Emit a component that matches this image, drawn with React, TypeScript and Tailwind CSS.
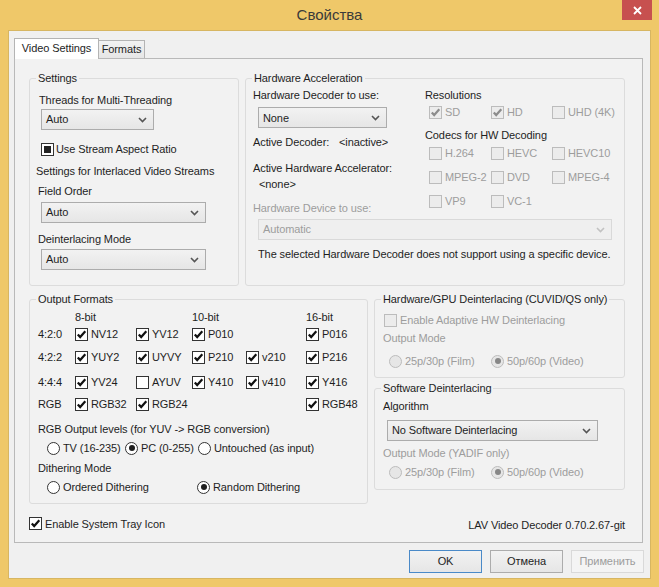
import React from 'react';

type BoxState = 'on' | 'off' | 'mixed';

function Box({ state, disabled }: { state: BoxState; disabled?: boolean }) {
  return (
    <span
      className={`flex h-[13px] w-[13px] shrink-0 items-center justify-center border ${
        disabled ? 'border-[#bcbcbc] bg-[#ececec]' : 'border-[#333333] bg-white'
      }`}
    >
      {state === 'on' && (
        <svg width="11" height="11" viewBox="0 0 11 11">
          <path d="M1.8 5.4 4.2 8.1 9.3 2.3" fill="none" stroke={disabled ? '#8c8c8c' : '#111111'} strokeWidth="2.2" />
        </svg>
      )}
      {state === 'mixed' && <span className="h-[7px] w-[7px] bg-[#222222]" />}
    </span>
  );
}

function Check({ label, state = 'on', disabled }: { label: string; state?: BoxState; disabled?: boolean }) {
  return (
    <span className="flex items-center gap-[3px] leading-[14px]">
      <Box state={state} disabled={disabled} />
      <span className={disabled ? 'text-[#9d9d9d]' : ''}>{label}</span>
    </span>
  );
}

function Radio({ label, checked, disabled }: { label: string; checked?: boolean; disabled?: boolean }) {
  return (
    <span className="flex items-center gap-[3px] leading-[14px]">
      <span
        className={`flex h-[13px] w-[13px] shrink-0 items-center justify-center rounded-full border ${
          disabled ? 'border-[#bcbcbc] bg-[#e6e6e6]' : 'border-[#333333] bg-white'
        }`}
      >
        {checked && <span className={`h-[6px] w-[6px] rounded-full ${disabled ? 'bg-[#878787]' : 'bg-[#1e1e1e]'}`} />}
      </span>
      <span className={disabled ? 'text-[#9d9d9d]' : ''}>{label}</span>
    </span>
  );
}

function Combo({ value, className, disabled }: { value: string; className: string; disabled?: boolean }) {
  return (
    <div
      className={`flex h-[21px] items-center justify-between border pl-[4px] pr-[6px] ${className} ${
        disabled
          ? 'border-[#d9d9d9] bg-[#efefef] text-[#9d9d9d]'
          : 'border-[#acacac] bg-linear-to-b from-[#f2f2f2] to-[#e6e6e6]'
      }`}
    >
      <span>{value}</span>
      <svg width="9" height="6" viewBox="0 0 9 6">
        <path d="M1 1 4.5 4.5 8 1" fill="none" stroke={disabled ? '#c2c2c2' : '#555555'} strokeWidth="1.6" />
      </svg>
    </div>
  );
}

function Group({ title, className, children }: { title: string; className: string; children: React.ReactNode }) {
  return (
    <fieldset className={`rounded-[3px] border border-[#dcdcdc] ${className}`}>
      <legend className="ml-[6px] px-[2px] leading-[14px]">{title}</legend>
      {children}
    </fieldset>
  );
}

const formatRows: { name: string; cells: (null | { label: string; on: boolean })[] }[] = [
  { name: '4:2:0', cells: [{ label: 'NV12', on: true }, { label: 'YV12', on: true }, { label: 'P010', on: true }, null, { label: 'P016', on: true }] },
  { name: '4:2:2', cells: [{ label: 'YUY2', on: true }, { label: 'UYVY', on: true }, { label: 'P210', on: true }, { label: 'v210', on: true }, { label: 'P216', on: true }] },
  { name: '4:4:4', cells: [{ label: 'YV24', on: true }, { label: 'AYUV', on: false }, { label: 'Y410', on: true }, { label: 'v410', on: true }, { label: 'Y416', on: true }] },
  { name: 'RGB', cells: [{ label: 'RGB32', on: true }, { label: 'RGB24', on: true }, null, null, { label: 'RGB48', on: true }] },
];

const rowGaps = ['mt-[3px]', 'mt-[9px]', 'mt-[11px]', 'mt-[8px]'];

export default function App() {
  return (
    <div className="relative h-[587px] w-[659px] overflow-hidden bg-[#efc869] font-['Liberation_Sans',Arial,sans-serif] text-[11px] tracking-[-0.1px] text-[#1e1e1e]">
      {/* title bar */}
      <div className="flex h-[30px] items-center justify-center text-[15px] tracking-normal text-[#3a3a3a]">Свойства</div>
      <button className="absolute right-[7px] top-0 flex h-[20px] w-[30px] items-center justify-center bg-[#c7504f]">
        <svg width="9" height="9" viewBox="0 0 9 9">
          <path d="M1 1 8 8M8 1 1 8" stroke="#ffffff" strokeWidth="1.8" />
        </svg>
      </button>

      {/* client area */}
      <div className="mx-[8px] h-[549px] border border-[#d7b662] bg-[#f0f0f0] pl-[5px] pt-[7px]">
        {/* tabs */}
        <div className="flex h-[20px] items-end">
          <div className="relative z-10 -mb-px flex h-[21px] w-[85px] items-center justify-center border border-b-0 border-[#b4b4b4] bg-white pb-[1px]">
            Video Settings
          </div>
          <div className="flex h-[18px] w-[46px] items-center justify-center border border-b-0 border-l-0 border-[#b4b4b4] bg-linear-to-b from-[#f2f2f2] to-[#e6e6e6]">
            Formats
          </div>
        </div>

        {/* tab page */}
        <div className="h-[485px] w-[629px] border border-[#b9b9b9] bg-[#f2f2f2] pl-[14px] pr-[17px] pt-[12px]">
          <div className="flex gap-[6px]">
            <Group title="Settings" className="h-[215px] w-[210px]">
              <div className="ml-[9px] mt-[8px] leading-[14px]">Threads for Multi-Threading</div>
              <Combo value="Auto" className="ml-[11px] mt-[2px] w-[113px]" />
              <div className="ml-[11px] mt-[12px] flex items-center gap-[2px] leading-[14px]">
                <Box state="mixed" />
                <span>Use Stream Aspect Ratio</span>
              </div>
              <div className="ml-[6px] mt-[8px] leading-[14px]">Settings for Interlaced Video Streams</div>
              <div className="ml-[8px] mt-[6px] leading-[14px]">Field Order</div>
              <Combo value="Auto" className="ml-[11px] mt-[4px] w-[165px]" />
              <div className="ml-[8px] mt-[9px] leading-[14px]">Deinterlacing Mode</div>
              <Combo value="Auto" className="ml-[11px] mt-[3px] w-[165px]" />
            </Group>

            <Group title="Hardware Acceleration" className="h-[215px] w-[380px]">
              <div className="flex">
                <div className="ml-[7px] w-[172px] leading-[14px]">
                  <div className="mt-[3px]">Hardware Decoder to use:</div>
                  <Combo value="None" className="ml-[5px] mt-[5px] w-[129px]" />
                  <div className="mt-[7px] flex">
                    <span className="w-[86px]">Active Decoder:</span>
                    <span>&lt;inactive&gt;</span>
                  </div>
                  <div className="mt-[12px]">Active Hardware Accelerator:</div>
                  <div className="ml-[6px] mt-[2px]">&lt;none&gt;</div>
                  <div className="mt-[10px] text-[#9d9d9d]">Hardware Device to use:</div>
                </div>
                <div className="leading-[14px]">
                  <div className="mt-[3px]">Resolutions</div>
                  <div className="ml-[4px] mt-[3px] grid grid-cols-[62px_61px_auto]">
                    <Check label="SD" disabled />
                    <Check label="HD" disabled />
                    <Check label="UHD (4K)" state="off" disabled />
                  </div>
                  <div className="mt-[9px]">Codecs for HW Decoding</div>
                  <div className="ml-[4px] mt-[4px] grid grid-cols-[62px_61px_auto] gap-y-[10px]">
                    <Check label="H.264" state="off" disabled />
                    <Check label="HEVC" state="off" disabled />
                    <Check label="HEVC10" state="off" disabled />
                    <Check label="MPEG-2" state="off" disabled />
                    <Check label="DVD" state="off" disabled />
                    <Check label="MPEG-4" state="off" disabled />
                    <Check label="VP9" state="off" disabled />
                    <Check label="VC-1" state="off" disabled />
                  </div>
                </div>
              </div>
              <Combo value="Automatic" disabled className="ml-[12px] mt-[4px] w-[354px]" />
              <div className="ml-[12px] mt-[7px] leading-[14px]">
                The selected Hardware Decoder does not support using a specific device.
              </div>
            </Group>
          </div>

          <div className="mt-[6px] flex gap-[6px]">
            <Group title="Output Formats" className="h-[212px] w-[339px]">
              <div className="ml-[8px] mt-[4px] grid grid-cols-[37px_61px_56px_54px_60px_auto] leading-[14px]">
                <span />
                <span>8-bit</span>
                <span />
                <span>10-bit</span>
                <span />
                <span>16-bit</span>
              </div>
              {formatRows.map((row, i) => (
                <div
                  key={row.name}
                  className={`ml-[8px] grid grid-cols-[37px_61px_56px_54px_60px_auto] items-center leading-[14px] ${rowGaps[i]}`}
                >
                  <span>{row.name}</span>
                  {row.cells.map((c, j) => (c ? <Check key={j} label={c.label} state={c.on ? 'on' : 'off'} /> : <span key={j} />))}
                </div>
              ))}
              <div className="ml-[8px] mt-[11px] leading-[14px]">RGB Output levels (for YUV -&gt; RGB conversion)</div>
              <div className="ml-[17px] mt-[5px] flex">
                <div className="w-[78px]">
                  <Radio label="TV (16-235)" />
                </div>
                <div className="w-[73px]">
                  <Radio label="PC (0-255)" checked />
                </div>
                <Radio label="Untouched (as input)" />
              </div>
              <div className="ml-[8px] mt-[6px] leading-[14px]">Dithering Mode</div>
              <div className="ml-[17px] mt-[5px] flex">
                <div className="w-[150px]">
                  <Radio label="Ordered Dithering" />
                </div>
                <Radio label="Random Dithering" checked />
              </div>
            </Group>

            <div className="flex w-[251px] flex-col gap-[3px]">
              <Group title="Hardware/GPU Deinterlacing (CUVID/QS only)" className="h-[86px] w-[251px]">
                <div className="ml-[9px] mt-[7px]">
                  <Check label="Enable Adaptive HW Deinterlacing" state="off" disabled />
                </div>
                <div className="ml-[8px] mt-[4px] leading-[14px] text-[#9d9d9d]">Output Mode</div>
                <div className="ml-[14px] mt-[9px] flex">
                  <div className="w-[102px]">
                    <Radio label="25p/30p (Film)" disabled />
                  </div>
                  <Radio label="50p/60p (Video)" checked disabled />
                </div>
              </Group>
              <Group title="Software Deinterlacing" className="h-[109px] w-[251px]">
                <div className="ml-[8px] mt-[4px] leading-[14px]">Algorithm</div>
                <Combo value="No Software Deinterlacing" className="ml-[12px] mt-[7px] w-[211px]" />
                <div className="ml-[8px] mt-[5px] leading-[14px] text-[#9d9d9d]">Output Mode (YADIF only)</div>
                <div className="ml-[14px] mt-[5px] flex">
                  <div className="w-[102px]">
                    <Radio label="25p/30p (Film)" disabled />
                  </div>
                  <Radio label="50p/60p (Video)" checked disabled />
                </div>
              </Group>
            </div>
          </div>

          <div className="mt-[11px] flex items-center justify-between">
            <Check label="Enable System Tray Icon" />
            <span className="mt-[3px] leading-[14px]">LAV Video Decoder 0.70.2.67-git</span>
          </div>
        </div>

        {/* dialog buttons */}
        <div className="mr-[6px] mt-[7px] flex justify-end gap-[8px]">
          <button className="h-[23px] w-[73px] border border-[#4a8ac8] bg-linear-to-b from-[#f2f2f2] to-[#e6e6e6]">OK</button>
          <button className="h-[23px] w-[73px] border border-[#acacac] bg-linear-to-b from-[#f2f2f2] to-[#e6e6e6]">Отмена</button>
          <button className="h-[23px] w-[73px] border border-[#d9d9d9] bg-[#f4f4f4] text-[#9d9d9d]">Применить</button>
        </div>
      </div>
    </div>
  );
}
